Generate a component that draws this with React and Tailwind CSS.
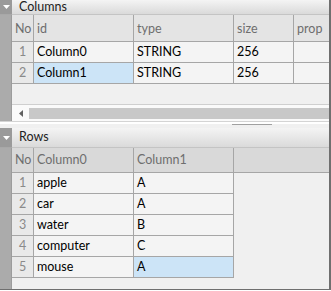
import React from 'react';

const colCols = [
  { key: 'id', label: 'id', w: 'w-[100px]' },
  { key: 'type', label: 'type', w: 'w-[100px]' },
  { key: 'size', label: 'size', w: 'w-[60px]' },
  { key: 'prop', label: 'prop', w: 'w-[60px]' },
];

const colRows = [
  { id: 'Column0', type: 'STRING', size: '256', prop: '' },
  { id: 'Column1', type: 'STRING', size: '256', prop: '', sel: 'id' },
];

const rowRows = [
  ['apple', 'A'],
  ['car', 'A'],
  ['water', 'B'],
  ['computer', 'C'],
  ['mouse', 'A', true],
];

// little collapse arrow in the panel header corner
const Corner = () => (
  <div className="w-[12px] shrink-0 bg-[#9a9a9a] flex items-center justify-center border-b border-[#a8a8a8]">
    <svg width="7" height="4" viewBox="0 0 7 4"><path d="M0 0h7L3.5 4z" fill="#ffffff" /></svg>
  </div>
);

const PanelHeader = ({ title, h }) => (
  <div className={`flex ${h} shrink-0`}>
    <Corner />
    <div className="flex-1 flex items-center pl-[7px] bg-gradient-to-b from-[#f4f4f4] to-[#dadada] border-b border-[#c4c4c4] text-[#222]">
      {title}
    </div>
  </div>
);

const App = () => {
  return (
    <div className="w-[331px] h-[291px] bg-white" style={{ fontFamily: 'Lato, "Noto Sans", sans-serif' }}>
      <div className="w-[331px] h-[290px] flex flex-col border-r-2 border-b border-[#6f6f6f] text-[12.5px] leading-none bg-[#f0f0f0] overflow-hidden">
        {/* Columns panel */}
        <PanelHeader title="Columns" h="h-[15px]" />
        <div className="flex h-[106px]">
          <div className="w-[12px] shrink-0 bg-[#ababab] border-r border-[#9c9c9c]" />
          <div className="flex-1 flex flex-col overflow-hidden">
            <div className="flex h-[27px] bg-[#e4e4e4] border-b border-[#a6a6a6] text-[#6e6e6e]">
              <div className="w-[22px] shrink-0 flex items-center pt-[3px] pl-[3px] border-r border-[#a6a6a6]">No</div>
              {colCols.map(c => (
                <div key={c.key} className={`${c.w} shrink-0 flex items-center pt-[3px] pl-[3px] border-r border-[#a6a6a6]`}>{c.label}</div>
              ))}
            </div>
            {colRows.map((r, i) => (
              <div key={i} className="flex h-[21px] border-b border-[#a6a6a6]">
                <div className="w-[22px] shrink-0 flex items-center justify-center bg-[#e9e9e9] text-[#8a8a8a] border-r border-[#a6a6a6]">{i + 1}</div>
                {colCols.map(c => (
                  <div key={c.key} className={`${c.w} shrink-0 flex items-center pl-[3px] border-r border-[#a6a6a6] text-black ${r.sel === c.key ? 'bg-[#cce4f7]' : 'bg-[#f4f4f4]'}`}>{r[c.key]}</div>
                ))}
              </div>
            ))}
            <div className="flex-1" />
            {/* horizontal scrollbar */}
            <div className="h-[17px] shrink-0 flex items-center bg-[#fafafa] border-t border-[#cfcfcf]">
              <div className="w-[17px] flex items-center justify-center">
                <svg width="4" height="7" viewBox="0 0 4 7"><path d="M4 0v7L0 3.5z" fill="#606060" /></svg>
              </div>
              <div className="flex-1 h-[11px] bg-[#c8c8c8]" />
            </div>
          </div>
        </div>
        {/* splitter */}
        <div className="h-[7px] shrink-0 flex flex-col bg-[#f0f0f0] border-t border-[#d4d4d4]">
          <div className="h-[2px] bg-white" />
          <div className="h-[1px] w-[40px] ml-[232px] bg-[#a0a0a0]" />
          <div className="flex-1" />
        </div>
        {/* Rows panel */}
        <PanelHeader title="Rows" h="h-[20px]" />
        <div className="flex flex-1">
          <div className="w-[12px] shrink-0 bg-[#ababab] border-r border-[#9c9c9c]" />
          <div className="flex-1 flex flex-col">
            <div className="flex h-[25px] bg-[#d9d9d9] border-b border-[#a6a6a6] text-[#6e6e6e]">
              <div className="w-[22px] shrink-0 flex items-center pl-[3px] border-r border-[#a6a6a6]">No</div>
              <div className="w-[100px] shrink-0 flex items-center pl-[3px] border-r border-[#a6a6a6]">Column0</div>
              <div className="w-[100px] shrink-0 flex items-center pl-[3px] border-r border-[#a6a6a6]">Column1</div>
            </div>
            {rowRows.map((r, i) => (
              <div key={i} className="flex h-[21px]">
                <div className="w-[22px] shrink-0 flex items-center justify-center bg-[#e9e9e9] text-[#8a8a8a] border-r border-b border-[#a6a6a6]">{i + 1}</div>
                <div className="w-[100px] shrink-0 flex items-center pl-[3px] bg-[#f4f4f4] border-r border-b border-[#a6a6a6] text-black">{r[0]}</div>
                <div className={`w-[100px] shrink-0 flex items-center pl-[3px] border-r border-b border-[#a6a6a6] text-black ${r[2] ? 'bg-[#cce4f7]' : 'bg-[#f4f4f4]'}`}>{r[1]}</div>
              </div>
            ))}
          </div>
        </div>
      </div>
    </div>
  );
};

export default App;
